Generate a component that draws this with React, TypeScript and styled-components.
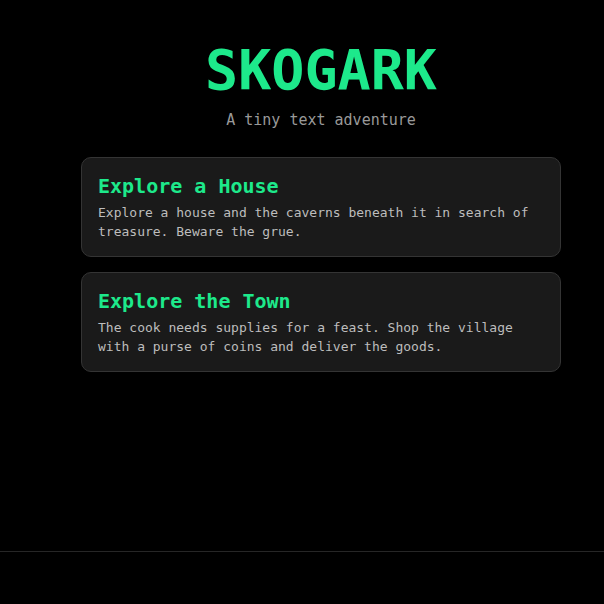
import React from 'react'
import styled, { createGlobalStyle } from 'styled-components'

const GlobalStyle = createGlobalStyle`
  html, body {
    margin: 0;
    padding: 0;
    background: #000000;
  }
  body {
    font-family: "DejaVu Sans Mono", "Liberation Mono", monospace;
    color: #d0d0d0;
  }
`

const StyledApp = styled.div`
  min-height: 100vh;
  display: flex;
  flex-direction: column;
`

const StyledMain = styled.main`
  flex: 1;
  display: flex;
  flex-direction: column;
  align-items: center;
  padding: 38px 0 0 38px;
`

const StyledTitle = styled.h1`
  margin: 0;
  font-size: 55px;
  line-height: 64px;
  font-weight: bold;
  color: #1de98b;
`

const StyledSubtitle = styled.div`
  margin-top: 8px;
  font-size: 15px;
  line-height: 20px;
  color: #999999;
`

const StyledList = styled.div`
  margin-top: 27px;
  width: 480px;
  display: flex;
  flex-direction: column;
  gap: 15px;
`

const StyledCard = styled.div`
  box-sizing: border-box;
  background: #1a1a1a;
  border: 1px solid #343434;
  border-radius: 10px;
  padding: 15px 16px 15px 16px;
  cursor: pointer;
`

const StyledCardTitle = styled.div`
  font-size: 20px;
  line-height: 26px;
  font-weight: bold;
  color: #1de98b;
`

const StyledCardText = styled.div`
  margin-top: 4px;
  font-size: 13px;
  line-height: 19px;
  color: #bdbdbd;
`

const StyledFooter = styled.footer`
  height: 52px;
  border-top: 1px solid #262626;
`

interface Adventure {
  title: string,
  text: string
}

const adventures: Adventure[] = [
  {
    title: 'Explore a House',
    text: 'Explore a house and the caverns beneath it in search of treasure. Beware the grue.'
  },
  {
    title: 'Explore the Town',
    text: 'The cook needs supplies for a feast. Shop the village with a purse of coins and deliver the goods.'
  }
]

const App = () => {
  return (
    <StyledApp>
      <GlobalStyle />
      <StyledMain>
        <StyledTitle>SKOGARK</StyledTitle>
        <StyledSubtitle>A tiny text adventure</StyledSubtitle>
        <StyledList>
          {adventures.map((a) => (
            <StyledCard key={a.title}>
              <StyledCardTitle>{a.title}</StyledCardTitle>
              <StyledCardText>{a.text}</StyledCardText>
            </StyledCard>
          ))}
        </StyledList>
      </StyledMain>
      <StyledFooter />
    </StyledApp>
  )
}

export default App
